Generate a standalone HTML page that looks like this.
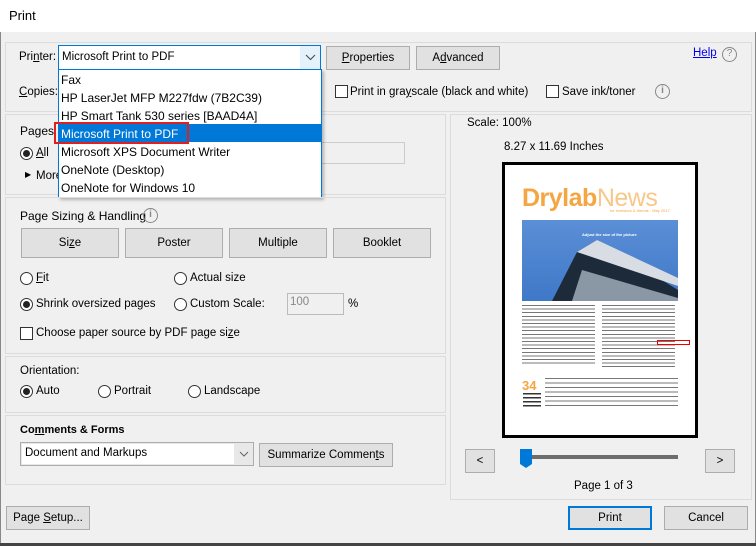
<!DOCTYPE html>
<html><head><meta charset="utf-8"><style>
*{box-sizing:border-box;margin:0;padding:0}
body{width:756px;height:546px;position:relative;background:#f0f0f0;font-family:"Liberation Sans",sans-serif;font-size:11.5px;color:#000;overflow:hidden}
.a{position:absolute;white-space:nowrap}
.grp{position:absolute;border:1px solid #dcdcdc}
.btn{position:absolute;background:#e1e1e1;border:1px solid #adadad;text-align:center;font-size:11.5px}
.rad{position:absolute;width:13px;height:13px;border:1px solid #333;border-radius:50%;background:#fff}
.rad.on::after{content:"";position:absolute;left:2px;top:2px;width:7px;height:7px;border-radius:50%;background:#222}
.chk{position:absolute;width:13px;height:13px;border:1px solid #333;background:#fff}
.info{position:absolute;width:15px;height:15px;border:1.5px solid #888;border-radius:50%;color:#888;font-size:10px;font-weight:bold;text-align:center;line-height:12px}
</style></head><body>
<div class="a" style="left:0;top:0;width:756px;height:32px;background:#fff"></div>
<div class="a" style="left:9px;top:8px;font-size:13px">Print</div>
<div class="a" style="left:0;top:32px;width:1px;height:514px;background:#888"></div>
<div class="a" style="left:755px;top:32px;width:1px;height:514px;background:#888"></div>
<div class="a" style="left:0;top:543px;width:756px;height:3px;background:#444"></div>

<div class="grp" style="left:5px;top:42px;width:747px;height:70px"></div>
<div class="a" style="left:19px;top:51px">Pri<u>n</u>ter:</div>
<div class="a" style="left:58px;top:45px;width:263px;height:25px;border:1px solid #0078d7;background:#fff"></div>
<div class="a" style="left:62px;top:51px">Microsoft Print to PDF</div>
<div class="a" style="left:300px;top:46px;width:20px;height:23px;background:#e5f1fb"></div>
<svg class="a" style="left:305px;top:54px" width="11" height="7"><path d="M1 1 L5.5 5.5 L10 1" stroke="#444" fill="none"/></svg>
<div class="btn" style="left:326px;top:46px;width:84px;height:24px;line-height:22px"><u>P</u>roperties</div>
<div class="btn" style="left:416px;top:46px;width:84px;height:24px;line-height:22px">A<u>d</u>vanced</div>
<div class="a" style="left:693px;top:47px;color:#0000ee;text-decoration:underline">Help</div>
<div class="info" style="left:722px;top:47px;font-weight:normal">?</div>
<div class="a" style="left:19px;top:86px"><u>C</u>opies:</div>
<div class="chk" style="left:335px;top:85px"></div>
<div class="a" style="left:350px;top:86px">Print in gra<u>y</u>scale (black and white)</div>
<div class="chk" style="left:546px;top:85px"></div>
<div class="a" style="left:562px;top:86px">Save ink/toner</div>
<div class="info" style="left:655px;top:84px">i</div>

<div class="grp" style="left:5px;top:114px;width:441px;height:81px"></div>
<div class="a" style="left:20px;top:124px;font-size:12px">Pages</div>
<div class="rad on" style="left:20px;top:147px"></div>
<div class="a" style="left:36px;top:147px"><u>A</u>ll</div>
<div class="a" style="left:25px;top:170px;font-size:8px">&#9654;</div>
<div class="a" style="left:36px;top:170px">More</div>
<div class="a" style="left:320px;top:142px;width:85px;height:22px;border:1px solid #ccc"></div>

<div class="a" style="left:58px;top:69px;width:264px;height:129px;border:1px solid #0078d7;background:#fff;box-shadow:2px 2px 3px rgba(0,0,0,.25)"></div>
<div class="a" style="left:59px;top:124px;width:262px;height:18px;background:#0078d7"></div>
<div class="a" style="left:61px;top:71px;line-height:18px;font-size:12px">Fax<br>HP LaserJet MFP M227fdw (7B2C39)<br>HP Smart Tank 530 series [BAAD4A]<br><span style="color:#fff">Microsoft Print to PDF</span><br>Microsoft XPS Document Writer<br>OneNote (Desktop)<br>OneNote for Windows 10</div>
<div class="a" style="left:54px;top:122px;width:135px;height:22px;border:2px solid #e02020"></div>

<div class="grp" style="left:5px;top:197px;width:441px;height:157px"></div>
<div class="a" style="left:20px;top:209px;font-size:12px">Page Sizing &amp; Handling</div>
<div class="info" style="left:143px;top:208px">i</div>
<div class="btn" style="left:21px;top:228px;width:98px;height:30px;line-height:28px">Si<u>z</u>e</div>
<div class="btn" style="left:125px;top:228px;width:98px;height:30px;line-height:28px">Poster</div>
<div class="btn" style="left:229px;top:228px;width:98px;height:30px;line-height:28px">Multiple</div>
<div class="btn" style="left:333px;top:228px;width:98px;height:30px;line-height:28px">Booklet</div>
<div class="rad" style="left:20px;top:272px"></div><div class="a" style="left:36px;top:272px"><u>F</u>it</div>
<div class="rad" style="left:174px;top:272px"></div><div class="a" style="left:190px;top:272px">Actual size</div>
<div class="rad on" style="left:20px;top:298px"></div><div class="a" style="left:36px;top:298px">Shrink oversized pages</div>
<div class="rad" style="left:174px;top:298px"></div><div class="a" style="left:190px;top:298px">Custom Scale:</div>
<div class="a" style="left:287px;top:293px;width:57px;height:22px;border:1px solid #bbb;color:#888;padding:2px 2px">100</div>
<div class="a" style="left:348px;top:298px">%</div>
<div class="chk" style="left:20px;top:327px"></div><div class="a" style="left:36px;top:327px">Choose paper source by PDF page si<u>z</u>e</div>

<div class="grp" style="left:5px;top:356px;width:441px;height:57px"></div>
<div class="a" style="left:20px;top:365px">Orientation:</div>
<div class="rad on" style="left:20px;top:385px"></div><div class="a" style="left:36px;top:385px">Auto</div>
<div class="rad" style="left:98px;top:385px"></div><div class="a" style="left:114px;top:385px">Portrait</div>
<div class="rad" style="left:188px;top:385px"></div><div class="a" style="left:204px;top:385px">Landscape</div>

<div class="grp" style="left:5px;top:415px;width:441px;height:70px"></div>
<div class="a" style="left:20px;top:424px;font-weight:bold;font-size:11px">Co<u>m</u>ments &amp; Forms</div>
<div class="a" style="left:20px;top:442px;width:234px;height:24px;border:1px solid #adadad;background:#e8e8e8"></div>
<div class="a" style="left:22px;top:444px;width:212px;height:20px;background:#fff"></div>
<div class="a" style="left:25px;top:447px">Document and Markups</div>
<svg class="a" style="left:239px;top:451px" width="10" height="6"><path d="M1 1 L5 5 L9 1" stroke="#666" fill="none"/></svg>
<div class="btn" style="left:259px;top:443px;width:134px;height:24px;line-height:22px">Summarize Commen<u>t</u>s</div>

<div class="btn" style="left:6px;top:506px;width:84px;height:24px;line-height:22px">Page <u>S</u>etup...</div>

<div class="grp" style="left:450px;top:114px;width:302px;height:386px"></div>
<div class="a" style="left:467px;top:117px">Scale: 100%</div>
<div class="a" style="left:504px;top:141px">8.27 x 11.69 Inches</div>
<div class="a" style="left:502px;top:162px;width:196px;height:276px;border:3px solid #000;background:#fff"></div>
<div class="a" style="left:522px;top:184px;font-size:25px;font-weight:bold;color:#f5a542;letter-spacing:-0.5px">Drylab<span style="font-weight:normal;color:#f8c88a">News</span></div>
<div class="a" style="left:610px;top:208px;font-size:4px;color:#f5a542">for investors &amp; friends · May 2017</div>
<div class="a" style="left:522px;top:220px;width:156px;height:81px;background:linear-gradient(180deg,#5b8fd6,#3f78c8)"></div>
<svg class="a" style="left:522px;top:240px" width="156" height="61"><polygon points="30,61 55,12 75,0 156,50 156,61" fill="#1c2a3a"/><polygon points="55,12 75,0 156,38 156,46" fill="#d8dde3"/><polygon points="50,61 60,30 156,58 156,61" fill="#8a98a6"/></svg>
<div class="a" style="left:582px;top:232px;font-size:4px;color:#fff;font-weight:bold">Adjust the size of the picture</div>
<div class="a" style="left:522px;top:305px;width:73px;height:60px;background:repeating-linear-gradient(180deg,#777 0 1px,transparent 1px 3.6px)"></div>
<div class="a" style="left:602px;top:305px;width:73px;height:62px;background:repeating-linear-gradient(180deg,#777 0 1px,transparent 1px 3.6px)"></div>
<div class="a" style="left:657px;top:340px;width:33px;height:5px;border:1px solid #e00"></div>
<div class="a" style="left:522px;top:378px;font-size:13px;font-weight:bold;color:#f5a542">34</div>
<div class="a" style="left:545px;top:378px;width:133px;height:30px;background:repeating-linear-gradient(180deg,#777 0 1px,transparent 1px 4.5px)"></div>
<div class="a" style="left:523px;top:393px;width:18px;height:14px;background:repeating-linear-gradient(180deg,#333 0 1.5px,transparent 1.5px 4px)"></div>

<div class="btn" style="left:465px;top:449px;width:30px;height:24px;line-height:22px">&lt;</div>
<div class="btn" style="left:705px;top:449px;width:30px;height:24px;line-height:22px">&gt;</div>
<div class="a" style="left:525px;top:455px;width:153px;height:4px;background:#6d6d6d"></div>
<svg class="a" style="left:520px;top:449px" width="12" height="20"><polygon points="0,0 12,0 12,15 6,19 0,15" fill="#0078d7"/></svg>
<div class="a" style="left:574px;top:480px">Page 1 of 3</div>

<div class="btn" style="left:568px;top:506px;width:84px;height:24px;line-height:20px;border:2px solid #0078d7">Print</div>
<div class="btn" style="left:664px;top:506px;width:84px;height:24px;line-height:22px">Cancel</div>
</body></html>
